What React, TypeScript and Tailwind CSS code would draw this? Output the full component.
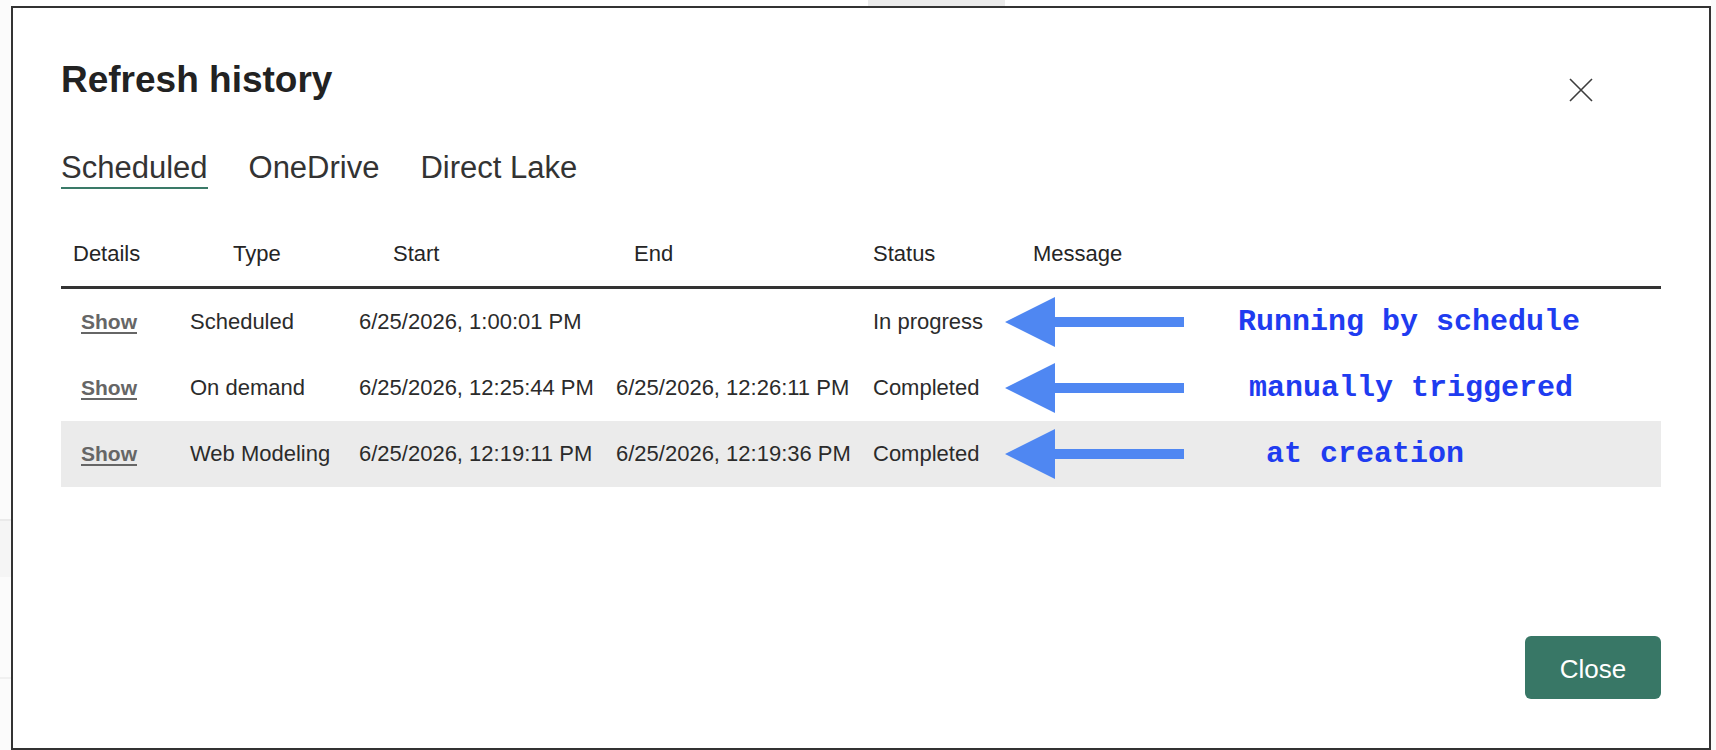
import React from 'react';

type Row = {
  type: string;
  start: string;
  end: string;
  status: string;
  note: string;
  noteGap: string;
  shaded: boolean;
};

const rows: Row[] = [
  {
    type: 'Scheduled',
    start: '6/25/2026, 1:00:01 PM',
    end: '',
    status: 'In progress',
    note: 'Running by schedule',
    noteGap: 'ml-[54px]',
    shaded: false,
  },
  {
    type: 'On demand',
    start: '6/25/2026, 12:25:44 PM',
    end: '6/25/2026, 12:26:11 PM',
    status: 'Completed',
    note: 'manually triggered',
    noteGap: 'ml-[65px]',
    shaded: false,
  },
  {
    type: 'Web Modeling',
    start: '6/25/2026, 12:19:11 PM',
    end: '6/25/2026, 12:19:36 PM',
    status: 'Completed',
    note: 'at creation',
    noteGap: 'ml-[82px]',
    shaded: true,
  },
];

function LeftArrow() {
  return (
    <svg width="179" height="50" viewBox="0 0 179 50" className="shrink-0">
      <path d="M0 25 L50 0 L50 20 L179 20 L179 30 L50 30 L50 50 Z" fill="#4f87f2" />
    </svg>
  );
}

function CloseIcon() {
  return (
    <svg width="24" height="24" viewBox="0 0 24 24">
      <path d="M1 1 L23 23 M23 1 L1 23" stroke="#3d3d3d" strokeWidth="1.6" fill="none" />
    </svg>
  );
}

export default function App() {
  return (
    <div className="flex w-[1716px] h-[750px] bg-white font-['Liberation_Sans',Arial,sans-serif] text-[#2b2b2b] overflow-hidden">
      {/* page behind the dialog, left edge */}
      <div className="w-[11px] h-full bg-[#fbfbfb] flex flex-col">
        <div className="h-[519px]" />
        <div className="h-[58px] bg-[#f5f5f5] border-t-2 border-[#eaeaea]" />
        <div className="h-[100px]" />
        <div className="h-[2px] bg-[#f0f0f0]" />
      </div>

      <div className="flex-1 flex flex-col">
        <div className="h-[6px] shrink-0">
          <div className="ml-[857px] w-[137px] h-full bg-[#ebebeb]" />
        </div>

        {/* dialog */}
        <div className="flex-1 border-2 border-[#333] bg-white flex flex-col px-[48px]">
          <div className="flex justify-between items-start pt-[53px]">
            <h1 className="text-[37px] leading-none font-bold text-[#222]">Refresh history</h1>
            <button className="mt-[17px] mr-[68px]">
              <CloseIcon />
            </button>
          </div>

          <div className="flex gap-[41px] mt-[50px] text-[31px] leading-none text-[#333]">
            <span className="pb-[4px] border-b-2 border-[#3a7a68]">Scheduled</span>
            <span className="pb-[4px] border-b-2 border-transparent">OneDrive</span>
            <span className="pb-[4px] border-b-2 border-transparent">Direct Lake</span>
          </div>

          {/* table header */}
          <div className="flex mt-[54px] pb-[21px] border-b-[3px] border-[#333] text-[22px] leading-none text-[#252525]">
            <div className="w-[129px] pl-[12px]">Details</div>
            <div className="w-[169px] pl-[43px]">Type</div>
            <div className="w-[257px] pl-[34px]">Start</div>
            <div className="w-[257px] pl-[18px]">End</div>
            <div className="w-[160px]">Status</div>
            <div>Message</div>
          </div>

          {rows.map((row) => (
            <div
              key={row.start}
              className={
                row.shaded
                  ? 'flex items-center h-[66px] bg-[#ebebeb] text-[22px] leading-none'
                  : 'flex items-center h-[66px] text-[22px] leading-none'
              }
            >
              <div className="w-[129px] pl-[20px]">
                <a className="text-[21px] font-bold text-[#666] underline underline-offset-[3px] decoration-2">
                  Show
                </a>
              </div>
              <div className="w-[169px]">{row.type}</div>
              <div className="w-[257px]">{row.start}</div>
              <div className="w-[257px]">{row.end}</div>
              <div className="w-[132px]">{row.status}</div>
              <LeftArrow />
              <span
                className={`${row.noteGap} font-['Liberation_Mono',monospace] font-bold text-[30px] leading-none text-[#1f3cf0]`}
              >
                {row.note}
              </span>
            </div>
          ))}

          <div className="flex-1" />

          <div className="flex justify-end pb-[49px]">
            <button className="w-[136px] h-[63px] rounded-[6px] bg-[#387766] text-white text-[26px] pt-[3px]">
              Close
            </button>
          </div>
        </div>
      </div>

      {/* page behind the dialog, right edge */}
      <div className="w-[5px] h-full bg-[#fafafa]" />
    </div>
  );
}
